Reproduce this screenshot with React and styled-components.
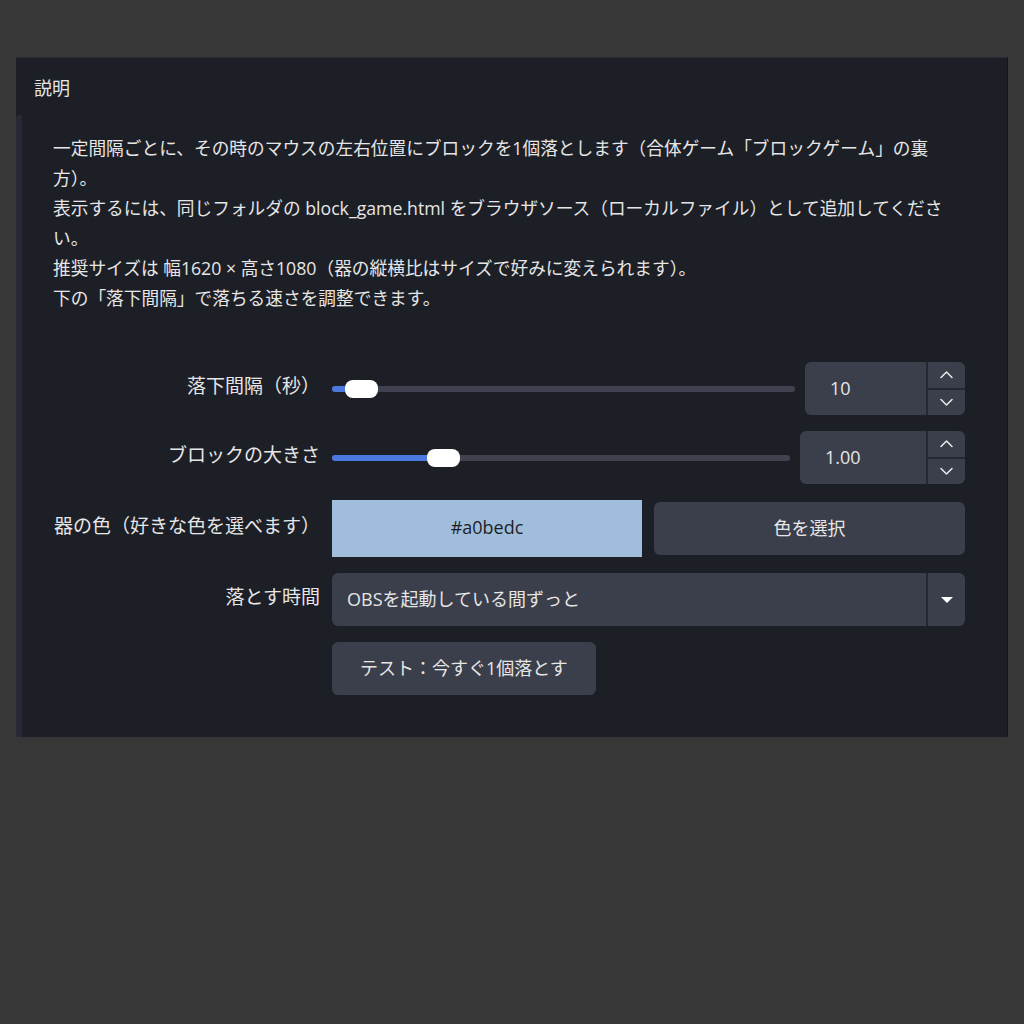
import React from 'react';
import styled, { createGlobalStyle } from 'styled-components';

const bg = '#373737';
const panel = '#1d1f27';
const strip = '#272a34';
const field = '#3b3e4b';
const divider = '#252731';
const text = '#e6e6e6';
const blue = '#4a78de';

const GlobalStyle = createGlobalStyle`
  html, body {
    margin: 0;
    background: ${bg};
    font-family: "Open Sans", "Noto Sans CJK JP", sans-serif;
    color: ${text};
  }
  * { box-sizing: border-box; }
`;

const Page = styled.div`
  padding: 57px 16px 40px 16px;
  min-height: 1024px;
`;

const Panel = styled.section`
  background: ${panel};
  border-right: 1px solid #15161b;
  border-top: 1px solid #2c2e36;
`;

const Header = styled.div`
  height: 57px;
  display: flex;
  align-items: center;
  padding-left: 18px;
  font-size: 18px;
`;

const Body = styled.div`
  border-left: 6px solid ${strip};
  border-top-left-radius: 4px;
  padding: 18px 42px 42px 0;
`;

const Description = styled.div`
  padding-left: 31px;
  font-size: 17.7px;
  line-height: 30px;
  white-space: nowrap;
`;

const Form = styled.div`
  margin-top: 49px;
  display: grid;
  grid-template-columns: 298px 1fr;
  column-gap: 12px;
  row-gap: 16px;
  align-items: center;
`;

const Label = styled.div`
  text-align: right;
  font-size: 19px;
  white-space: nowrap;
  padding-bottom: 8px;
`;

const Field = styled.div`
  display: flex;
  align-items: center;
  gap: 10px;
  height: 53px;
`;

const Track = styled.div`
  position: relative;
  flex: 1;
  height: 6px;
  border-radius: 3px;
  background: #40434f;
`;

const Fill = styled.div`
  position: absolute;
  left: 0;
  top: 0;
  bottom: 0;
  border-radius: 3px;
  background: ${blue};
`;

const Thumb = styled.div`
  position: absolute;
  top: -6px;
  width: 33px;
  height: 18px;
  border-radius: 8px;
  background: #ffffff;
`;

const Spin = styled.div`
  width: ${p => p.$w}px;
  height: 53px;
  display: flex;
  background: ${field};
  border-radius: 6px;
  overflow: hidden;
`;

const SpinValue = styled.div`
  flex: 1;
  display: flex;
  align-items: center;
  padding: 0 0 2px 25px;
  font-size: 18px;
`;

const SpinButtons = styled.div`
  width: 39px;
  display: flex;
  flex-direction: column;
  border-left: 2px solid ${divider};
`;

const SpinButton = styled.div`
  flex: 1;
  display: flex;
  align-items: center;
  justify-content: center;
  & + & { border-top: 2px solid ${divider}; }
`;

const ColorRow = styled.div`
  display: grid;
  grid-template-columns: 310px 1fr;
  gap: 12px;
  align-items: center;
  height: 57px;
`;

const Swatch = styled.div`
  height: 57px;
  background: #a0bedc;
  color: #1d1f27;
  display: flex;
  align-items: center;
  justify-content: center;
  padding-bottom: 3px;
  font-size: 18px;
`;

const Button = styled.div`
  height: 53px;
  display: inline-flex;
  align-items: center;
  justify-content: center;
  padding: 0 28px 3px;
  background: ${field};
  border-radius: 6px;
  font-size: 18px;
  white-space: nowrap;
`;

const ButtonCell = styled.div`
  display: flex;
`;

const Select = styled.div`
  height: 53px;
  display: flex;
  background: ${field};
  border-radius: 6px;
  overflow: hidden;
`;

const SelectValue = styled.div`
  flex: 1;
  display: flex;
  align-items: center;
  padding: 0 0 3px 15px;
  font-size: 18px;
`;

const SelectArrow = styled.div`
  width: 39px;
  display: flex;
  align-items: center;
  justify-content: center;
  border-left: 2px solid ${divider};
`;

const Chevron = ({ up }) => (
  <svg width="15" height="9" viewBox="0 0 15 9">
    <path
      d={up ? 'M2 7.5 L7.5 2 L13 7.5' : 'M2 1.5 L7.5 7 L13 1.5'}
      fill="none"
      stroke="#e6e6e6"
      strokeWidth="1.6"
      strokeLinecap="round"
      strokeLinejoin="round"
    />
  </svg>
);

const Triangle = () => (
  <svg width="14" height="8" viewBox="0 0 14 8">
    <path d="M1 1 L13 1 L7 7 Z" fill="#ffffff" />
  </svg>
);

const Slider = ({ ratio }) => (
  <Track>
    <Fill style={{ width: `calc(${ratio} * (100% - 33px) + 16px)` }} />
    <Thumb style={{ left: `calc(${ratio} * (100% - 33px))` }} />
  </Track>
);

const SpinBox = ({ value, width }) => (
  <Spin $w={width}>
    <SpinValue>{value}</SpinValue>
    <SpinButtons>
      <SpinButton><Chevron up /></SpinButton>
      <SpinButton><Chevron /></SpinButton>
    </SpinButtons>
  </Spin>
);

const lines = [
  '一定間隔ごとに、その時のマウスの左右位置にブロックを1個落とします（合体ゲーム「ブロックゲーム」の裏',
  '方）。',
  '表示するには、同じフォルダの block_game.html をブラウザソース（ローカルファイル）として追加してくださ',
  'い。',
  '推奨サイズは 幅1620 × 高さ1080（器の縦横比はサイズで好みに変えられます）。',
  '下の「落下間隔」で落ちる速さを調整できます。',
];

export default function App() {
  return (
    <>
      <GlobalStyle />
      <Page>
        <Panel>
          <Header>説明</Header>
          <Body>
            <Description>
              {lines.map((l, i) => <div key={i}>{l}</div>)}
            </Description>
            <Form>
              <Label>落下間隔（秒）</Label>
              <Field>
                <Slider ratio={0.03} />
                <SpinBox value="10" width={160} />
              </Field>

              <Label>ブロックの大きさ</Label>
              <Field>
                <Slider ratio={0.223} />
                <SpinBox value="1.00" width={165} />
              </Field>

              <Label>器の色（好きな色を選べます）</Label>
              <ColorRow>
                <Swatch>#a0bedc</Swatch>
                <Button>色を選択</Button>
              </ColorRow>

              <Label>落とす時間</Label>
              <Select>
                <SelectValue>OBSを起動している間ずっと</SelectValue>
                <SelectArrow><Triangle /></SelectArrow>
              </Select>

              <span />
              <ButtonCell>
                <Button>テスト：今すぐ1個落とす</Button>
              </ButtonCell>
            </Form>
          </Body>
        </Panel>
      </Page>
    </>
  );
}
